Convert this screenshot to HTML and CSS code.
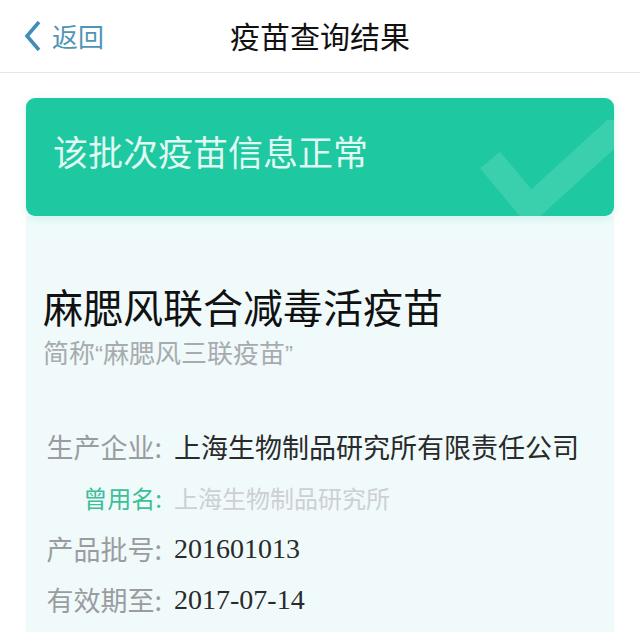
FILE: index.html
```html
<!DOCTYPE html>
<html lang="zh-CN">
<head>
    <meta charset="UTF-8">
    <meta name="viewport" content="width=device-width, initial-scale=1.0">
    <title>疫苗查询结果</title>
    <link rel="stylesheet" href="styles.css">
</head>
<body>
    <div class="navbar">
        <a class="back" href="#">
            <svg class="back-icon" width="20" height="30" viewBox="0 0 20 30">
                <path d="M16 1 L4 15 L16 29" fill="none" stroke="#3f8db8" stroke-width="3.6" stroke-linejoin="miter"/>
            </svg>
            <span>返回</span>
        </a>
        <div class="nav-title">疫苗查询结果</div>
    </div>
    <div class="content">
        <div class="banner">
            <span>该批次疫苗信息正常</span>
            <svg class="banner-check" width="140" height="120" viewBox="0 0 140 120">
                <path d="M10 40 L50 88 L140 6" fill="none" stroke="rgba(255,255,255,0.13)" stroke-width="26"/>
            </svg>
        </div>
        <div class="card">
            <h1 class="vaccine-name">麻腮风联合减毒活疫苗</h1>
            <p class="vaccine-short">简称<span class="quote">“</span>麻腮风三联疫苗<span class="quote">”</span></p>
            <div class="info">
                <div class="info-label">生产企业:</div>
                <div class="info-value">上海生物制品研究所有限责任公司</div>
                <div class="info-label old">曾用名:</div>
                <div class="info-value old">上海生物制品研究所</div>
                <div class="info-label">产品批号:</div>
                <div class="info-value num">201601013</div>
                <div class="info-label">有效期至:</div>
                <div class="info-value num">2017-07-14</div>
            </div>
        </div>
    </div>
</body>
</html>
```

FILE: styles.css
```css
body {
    margin: 0;
    padding: 0;
    background: #fff;
    font-family: "Noto Sans CJK SC", "Noto Sans", sans-serif;
    color: #222;
    overflow: hidden;
}
.navbar {
    position: relative;
    height: 72px;
    border-bottom: 1px solid #e4e6e8;
    display: flex;
    align-items: center;
    justify-content: center;
}
.back {
    position: absolute;
    left: 23px;
    top: 0;
    height: 72px;
    display: flex;
    align-items: center;
    gap: 9px;
    color: #4f95b5;
    text-decoration: none;
    font-size: 26px;
}
.back span {
    margin-top: -2px;
}
.nav-title {
    font-size: 30px;
    color: #111;
    margin-top: -2px;
}
.content {
    padding: 25px 26px 0;
}
.banner {
    position: relative;
    height: 118px;
    background: #1ec9a1;
    border-radius: 9px;
    box-shadow: 0 2px 10px rgba(30, 201, 161, 0.18);
    overflow: hidden;
    display: flex;
    align-items: center;
    padding-left: 27px;
    color: rgba(255, 255, 255, 0.88);
    font-size: 35px;
}
.banner span {
    margin-top: -14px;
}
.banner-check {
    position: absolute;
    right: -6px;
    top: 22px;
}
.card {
    background: #f0fafb;
    padding: 68px 17px 12px;
}
.vaccine-name {
    margin: 0;
    font-size: 40px;
    font-weight: 400;
    line-height: 44px;
    color: #111;
}
.vaccine-short {
    margin: 7px 0 0;
    font-size: 26px;
    line-height: 34px;
    color: #a8abae;
}
.quote {
    font-family: "Liberation Sans", sans-serif;
    font-size: 24px;
}
.info {
    display: grid;
    grid-template-columns: 120px 1fr;
    column-gap: 12px;
    row-gap: 11px;
    margin-top: 55px;
    margin-left: -1px;
}
.info-label {
    text-align: right;
    font-size: 27px;
    line-height: 40px;
    color: #9a9d9f;
}
.info-label.old {
    font-size: 24px;
    color: #3dbf98;
}
.info-value {
    font-size: 27px;
    line-height: 40px;
    color: #2a2a2a;
    white-space: nowrap;
}
.info-value.old {
    font-size: 24px;
    color: #cdd0d2;
}
.info-value.num {
    font-family: "Liberation Serif", serif;
    font-size: 28px;
}
```
